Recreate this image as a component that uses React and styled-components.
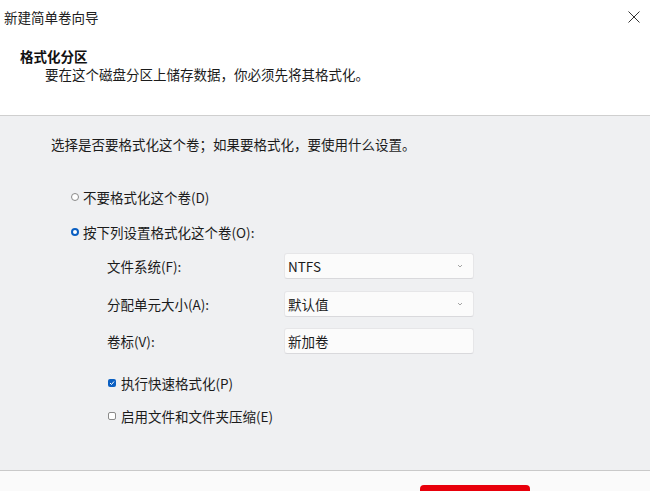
import React from "react";
import styled, { createGlobalStyle } from "styled-components";

const GlobalStyle = createGlobalStyle`
  html, body {
    margin: 0;
    padding: 0;
    background: #ffffff;
    overflow: hidden;
  }
  * { box-sizing: border-box; }
`;

const Window = styled.div`
  width: 650px;
  height: 491px;
  overflow: hidden;
  display: flex;
  flex-direction: column;
  font-family: "Noto Sans CJK SC", "Noto Sans", sans-serif;
  font-size: 13.5px;
  color: #1b1b1b;
  background: #ffffff;
`;

const Top = styled.div`
  height: 116px;
  flex-shrink: 0;
  background: #ffffff;
  border-bottom: 1px solid #cfcfcf;
`;

const TitleBar = styled.div`
  height: 33px;
  display: flex;
  align-items: center;
  justify-content: space-between;
  padding: 0 9px 0 4px;
`;

const Title = styled.span`
  line-height: 18px;
  color: #202020;
`;

const Close = styled.button`
  border: none;
  background: none;
  padding: 0;
  width: 14px;
  height: 14px;
  display: flex;
  align-items: center;
  justify-content: center;
`;

const Header = styled.div`
  padding: 14px 0 0 20px;
`;

const Heading = styled.div`
  font-weight: 700;
  line-height: 18px;
  color: #111;
`;

const SubHeading = styled.div`
  line-height: 18px;
  padding-left: 25px;
`;

const Body = styled.div`
  height: 354px;
  flex-shrink: 0;
  background: #eff0f2;
  padding: 18px 0 0 51px;
  display: flex;
  flex-direction: column;
`;

const Line = styled.div`
  line-height: 20px;
  margin-top: ${(p) => p.$top || 0}px;
  margin-left: ${(p) => p.$left || 0}px;
  display: flex;
  align-items: center;
  gap: ${(p) => p.$gap || 0}px;
`;

const Radio = styled.span`
  width: 8px;
  height: 8px;
  border-radius: 50%;
  flex-shrink: 0;
  border: ${(p) => (p.$on ? "2.5px solid #0a5fc2" : "1px solid #8a8a8a")};
  background: #fff;
`;

const Check = styled.span`
  width: 8px;
  height: 8px;
  border-radius: 2px;
  flex-shrink: 0;
  display: flex;
  align-items: center;
  justify-content: center;
  background: ${(p) => (p.$on ? "#0a5fc2" : "#fff")};
  border: ${(p) => (p.$on ? "none" : "1px solid #8a8a8a")};
`;

const Form = styled.div`
  margin: 11px 0 0 56px;
  display: flex;
  flex-direction: column;
  gap: 11.5px;
`;

const Row = styled.div`
  display: grid;
  grid-template-columns: 177px 190px;
  align-items: center;
  height: 26px;
`;

const Label = styled.span`
  line-height: 20px;
`;

const Field = styled.div`
  height: 26px;
  background: #fbfbfb;
  border: 1px solid #e6e6e8;
  border-bottom-color: #d9d9dc;
  border-radius: 3px;
  padding: 0 10px 0 3px;
  display: flex;
  align-items: center;
  justify-content: space-between;
  line-height: 20px;
  color: #1b1b1b;
`;

const Footer = styled.div`
  flex: 1;
  background: #fafafa;
  border-top: 1px solid #c9c9c9;
  padding: 14px 0 0 420px;
`;

const NextButton = styled.button`
  width: 110px;
  height: 30px;
  border: none;
  border-radius: 4px;
  background: #e8000b;
`;

const Chevron = () => (
  <svg width="6" height="4" viewBox="0 0 6 4">
    <path d="M1 1 L3 3 L5 1" fill="none" stroke="#9a9a9a" strokeWidth="0.9" />
  </svg>
);

export default function App() {
  return (
    <Window>
      <GlobalStyle />
      <Top>
        <TitleBar>
          <Title>新建简单卷向导</Title>
          <Close aria-label="关闭">
            <svg width="12" height="12" viewBox="0 0 12 12">
              <path d="M0.5 0.5 L11.5 11.5 M11.5 0.5 L0.5 11.5" stroke="#333" strokeWidth="1" />
            </svg>
          </Close>
        </TitleBar>
        <Header>
          <Heading>格式化分区</Heading>
          <SubHeading>要在这个磁盘分区上储存数据，你必须先将其格式化。</SubHeading>
        </Header>
      </Top>

      <Body>
        <Line>选择是否要格式化这个卷；如果要格式化，要使用什么设置。</Line>

        <Line $top={33} $left={20} $gap={4}>
          <Radio />
          不要格式化这个卷(D)
        </Line>
        <Line $top={15} $left={20} $gap={4}>
          <Radio $on />
          按下列设置格式化这个卷(O):
        </Line>

        <Form>
          <Row>
            <Label>文件系统(F):</Label>
            <Field>
              NTFS
              <Chevron />
            </Field>
          </Row>
          <Row>
            <Label>分配单元大小(A):</Label>
            <Field>
              默认值
              <Chevron />
            </Field>
          </Row>
          <Row>
            <Label>卷标(V):</Label>
            <Field>新加卷</Field>
          </Row>
        </Form>

        <Line $top={19} $left={57} $gap={5}>
          <Check $on>
            <svg width="6" height="6" viewBox="0 0 6 6">
              <path d="M1 3 L2.5 4.5 L5 1.5" fill="none" stroke="#fff" strokeWidth="1" />
            </svg>
          </Check>
          执行快速格式化(P)
        </Line>
        <Line $top={13} $left={57} $gap={5}>
          <Check />
          启用文件和文件夹压缩(E)
        </Line>
      </Body>

      <Footer>
        <NextButton aria-label="下一步" />
      </Footer>
    </Window>
  );
}
